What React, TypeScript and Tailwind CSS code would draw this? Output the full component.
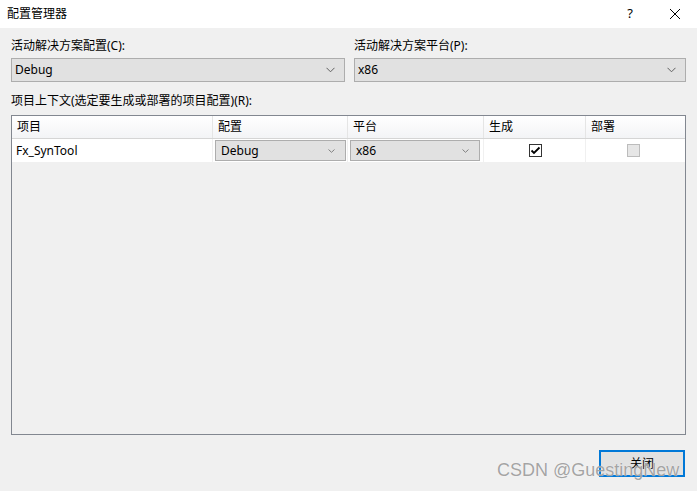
const font = { fontFamily: '"Noto Sans", "Noto Sans CJK SC", sans-serif' }

function Chevron() {
  return (
    <svg width="9" height="6" viewBox="0 0 9 6" className="shrink-0">
      <path d="M0.5 0.8 L4.5 4.8 L8.5 0.8" fill="none" stroke="#606060" strokeWidth="1" />
    </svg>
  )
}

function Combo({ value, small }: { value: string; small?: boolean }) {
  return (
    <div
      className={
        'flex items-center justify-between border border-[#adadad] bg-[#e1e1e1] text-[12px] text-black ' +
        (small ? 'h-[21px] pl-[5px] pr-[10px]' : 'h-[24px] pl-[3px] pr-[9px]')
      }
    >
      <span>{value}</span>
      {small ? (
        <svg width="7" height="4" viewBox="0 0 7 4">
          <path d="M0.5 0.5 L3.5 3.3 L6.5 0.5" fill="none" stroke="#808080" strokeWidth="1" />
        </svg>
      ) : (
        <Chevron />
      )}
    </div>
  )
}

const cols = [
  { label: '项目', w: 'w-[201px]' },
  { label: '配置', w: 'w-[135px]' },
  { label: '平台', w: 'w-[136px]' },
  { label: '生成', w: 'w-[102px]' },
  { label: '部署', w: 'flex-1' },
]

export default function App() {
  return (
    <div className="relative h-[491px] w-[697px] overflow-hidden bg-[#f0f0f0] text-black" style={font}>
      {/* title bar */}
      <div className="flex h-[28px] items-center bg-white pl-[7px] pr-[16px] text-[12px]">
        <span className="flex-1">配置管理器</span>
        <span className="mr-[36px] text-[13px]">?</span>
        <svg width="12" height="12" viewBox="0 0 12 12">
          <path d="M1 1 L11 11 M11 1 L1 11" stroke="#000" strokeWidth="1" />
        </svg>
      </div>

      <div className="px-[11px] pt-[10px]">
        <div className="flex gap-[9px]">
          <div className="w-[334px]">
            <div className="h-[16px] text-[12px] leading-[16px]">活动解决方案配置(C):</div>
            <div className="mt-[4px]">
              <Combo value="Debug" />
            </div>
          </div>
          <div className="flex-1">
            <div className="h-[16px] text-[12px] leading-[16px]">活动解决方案平台(P):</div>
            <div className="mt-[4px]">
              <Combo value="x86" />
            </div>
          </div>
        </div>

        <div className="mt-[11px] h-[16px] text-[12px] leading-[16px]">项目上下文(选定要生成或部署的项目配置)(R):</div>

        <div className="mt-[6px] h-[320px] border border-[#828790] bg-[#f0f0f0]">
          <div className="flex h-[23px] border-b border-[#d5d5d5] bg-gradient-to-b from-white to-[#f3f4f6]">
            {cols.map((c, i) => (
              <div
                key={c.label}
                className={
                  c.w +
                  ' flex items-center pl-[5px] text-[12px] ' +
                  (i < cols.length - 1 ? 'border-r border-[#e5e5e5]' : '')
                }
              >
                {c.label}
              </div>
            ))}
          </div>
          <div className="flex h-[23px] bg-white text-[12px]">
            <div className="flex w-[201px] items-center border-r border-[#f0f0f0] pl-[4px]">Fx_SynTool</div>
            <div className="w-[135px] border-r border-[#f0f0f0] py-[1px] pl-[2px] pr-[1px]">
              <Combo value="Debug" small />
            </div>
            <div className="w-[136px] border-r border-[#f0f0f0] py-[1px] pl-[2px] pr-[3px]">
              <Combo value="x86" small />
            </div>
            <div className="flex w-[102px] items-center justify-center border-r border-[#f0f0f0] pl-[1px]">
              <div className="flex h-[13px] w-[13px] items-center justify-center border border-[#333333] bg-white">
                <svg width="11" height="9" viewBox="0 0 11 9">
                  <path d="M1.5 4.5 L4 7 L9.5 1.5" fill="none" stroke="#000" strokeWidth="1.8" />
                </svg>
              </div>
            </div>
            <div className="flex flex-1 items-center justify-center pr-[4px]">
              <div className="h-[13px] w-[13px] border border-[#bcbcbc] bg-[#e6e6e6]" />
            </div>
          </div>
        </div>

        <div className="mt-[15px] flex justify-end pr-[1px]">
          <div className="flex h-[27px] w-[86px] items-center justify-center border-2 border-[#0078d7] bg-[#e1e1e1] text-[12px]">
            关闭
          </div>
        </div>
      </div>

      {/* watermark */}
      <div
        className="pointer-events-none absolute left-[497px] top-[457px] text-[18px] text-[#8c8c8c]/80"
        style={{ fontFamily: '"Liberation Sans", Arial, sans-serif', textShadow: '0 0 1px #fff' }}
      >
        CSDN @GuestingNew
      </div>
    </div>
  )
}
